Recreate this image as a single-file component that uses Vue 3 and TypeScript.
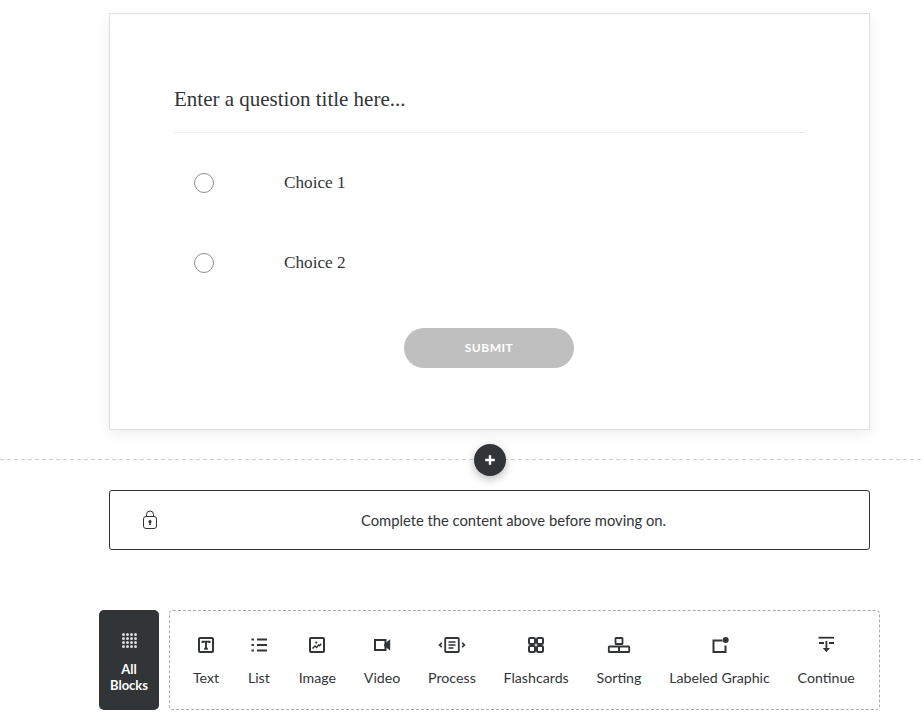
<script setup lang="ts">
interface Block { label: string; icon: string }
const blocks: Block[] = [
  { label: 'Text', icon: 'text' },
  { label: 'List', icon: 'list' },
  { label: 'Image', icon: 'image' },
  { label: 'Video', icon: 'video' },
  { label: 'Process', icon: 'process' },
  { label: 'Flashcards', icon: 'flashcards' },
  { label: 'Sorting', icon: 'sorting' },
  { label: 'Labeled Graphic', icon: 'labeled' },
  { label: 'Continue', icon: 'continue' },
]
const choices: string[] = ['Choice 1', 'Choice 2']
const dots: number[] = Array.from({ length: 16 }, (_, i) => i)
</script>

<template>
  <div class="page">
    <section class="card">
      <h2 class="title">Enter a question title here...</h2>
      <ul class="choices">
        <li v-for="c in choices" :key="c" class="choice">
          <span class="radio"></span>
          <span class="choice-text">{{ c }}</span>
        </li>
      </ul>
      <div class="submit-row"><button class="submit" type="button">SUBMIT</button></div>
    </section>

    <div class="separator">
      <button class="add" type="button" aria-label="Add block">
        <svg width="12" height="12" viewBox="0 0 12 12"><path d="M6 1.2v9.6M1.2 6h9.6" stroke="#fff" stroke-width="2.4" fill="none" /></svg>
      </button>
    </div>

    <div class="lock-box">
      <svg class="lock" width="16" height="20" viewBox="0 0 16 20" fill="none" stroke="#313537" stroke-width="1">
        <rect x="1.5" y="6.5" width="13" height="12" rx="2.5" />
        <path d="M4.5 6.5V4.5a3.5 3.5 0 0 1 7 0v2" />
        <circle cx="8" cy="11.5" r="1.6" fill="#313537" stroke="none" />
        <path d="M8 12v3" stroke-width="1.5" />
      </svg>
      <span class="lock-text">Complete the content above before moving on.</span>
    </div>

    <div class="toolbar">
      <button class="all" type="button">
        <span class="grid"><i v-for="d in dots" :key="d"></i></span>
        <span class="all-label">All<br />Blocks</span>
      </button>
      <div class="blocks">
        <div v-for="b in blocks" :key="b.label" class="block">
          <svg class="icon" width="24" height="24" viewBox="0 0 24 24" fill="none" stroke="#313537" stroke-width="2">
            <template v-if="b.icon === 'text'">
              <rect x="5" y="5" width="14" height="14" rx="1" />
              <path d="M8.5 10V8.6h7V10M12 8.6v7M10.2 15.8h3.6" stroke-width="1.9" />
            </template>
            <template v-else-if="b.icon === 'list'">
              <path d="M10 6.5h10M10 12h10M10 17.5h10" />
              <path d="M4.5 6.5h2.4M4.5 12h2.4M4.5 17.5h2.4" />
            </template>
            <template v-else-if="b.icon === 'image'">
              <rect x="5" y="5" width="14" height="14" rx="1" />
              <path d="M7.5 15.5l2.5-2.6 1.6 1.5 2-2.5 1 .8 1.6-2" stroke-width="1.4" />
              <circle cx="11.3" cy="9.6" r="1.1" fill="#313537" stroke="none" />
            </template>
            <template v-else-if="b.icon === 'video'">
              <rect x="5" y="7" width="10.5" height="10" />
              <path d="M15 11.6l4.3-3.4v7.6L15 12.6z" stroke-width="1.8" fill="#313537" />
            </template>
            <template v-else-if="b.icon === 'process'">
              <rect x="5.2" y="5" width="13.6" height="14" rx="1" stroke-width="1.8" />
              <path d="M8.5 9h7M8.5 12h7M8.5 15h5" stroke-width="1.6" />
              <path d="M1.8 9.8L-.4 12l2.2 2.2M22.2 9.8L24.4 12l-2.2 2.2" stroke-width="1.7" />
            </template>
            <template v-else-if="b.icon === 'flashcards'">
              <rect x="5" y="5" width="6" height="6" rx="1.2" />
              <rect x="13" y="5" width="6" height="6" rx="1.2" />
              <rect x="5" y="13" width="6" height="6" rx="1.2" />
              <rect x="13" y="13" width="6" height="6" rx="1.2" />
            </template>
            <template v-else-if="b.icon === 'sorting'">
              <rect x="8.5" y="5" width="7" height="6" rx=".6" stroke-width="1.8" />
              <rect x="1.8" y="13.5" width="10.2" height="5.5" rx=".6" stroke-width="1.8" />
              <rect x="12" y="13.5" width="10.2" height="5.5" rx=".6" stroke-width="1.8" />
            </template>
            <template v-else-if="b.icon === 'labeled'">
              <path d="M14.5 7.5H5.5V19h12v-6.5" stroke-width="2" />
              <circle cx="17.7" cy="7" r="3" fill="#313537" stroke="none" />
            </template>
            <template v-else>
              <path d="M4.5 4.7h15.5" stroke-width="1.8" />
              <path d="M5 10h5M15 10h5" stroke-width="1.8" />
              <path d="M12.4 8v8" stroke-width="1.8" />
              <path d="M8.8 15h7.2l-3.6 4.2z" fill="#313537" stroke="none" />
            </template>
          </svg>
          <span class="block-label">{{ b.label }}</span>
        </div>
      </div>
    </div>
  </div>
</template>

<style>
html, body { background: #fff; }
</style>

<style scoped>
.page {
  width: 924px;
  height: 726px;
  padding-top: 13px;
  box-sizing: border-box;
  overflow: hidden;
  font-family: "Lato", "Liberation Sans", sans-serif;
  color: #313537;
}
.card {
  box-sizing: border-box;
  width: 761px;
  height: 417px;
  margin-left: 109px;
  padding: 0 64px;
  border: 1px solid #e0e0e0;
  background: #fff;
  box-shadow: 0 4px 14px rgba(0, 0, 0, 0.07);
}
.title {
  margin: 0;
  padding: 72px 0 19px;
  height: 27px;
  line-height: 27px;
  box-sizing: content-box;
  font-family: "Liberation Serif", "DejaVu Serif", serif;
  font-size: 21px;
  font-weight: 400;
  color: #313537;
  border-bottom: 1px solid #ececec;
}
.choices { list-style: none; margin: 10px 0 0; padding: 0; }
.choice {
  display: flex;
  align-items: center;
  height: 80px;
  padding-left: 20px;
}
.radio {
  box-sizing: border-box;
  width: 20px;
  height: 20px;
  border: 1px solid #8f8f8f;
  border-radius: 50%;
  margin-right: 70px;
}
.choice-text {
  font-family: "Liberation Serif", "DejaVu Serif", serif;
  font-size: 17.2px;
  line-height: 20px;
  color: #313537;
}
.submit-row { display: flex; justify-content: center; margin: 25px 1px 0 0; }
.submit {
  width: 170px;
  height: 40px;
  padding: 0 0 2px;
  border: 0;
  border-radius: 20px;
  background: #bfbfbf;
  color: #fff;
  font-family: "Lato", sans-serif;
  font-size: 12px;
  font-weight: 700;
  letter-spacing: 0.5px;
}
.separator {
  box-sizing: border-box;
  display: flex;
  align-items: center;
  justify-content: center;
  height: 60px;
  padding: 0 54px 0 109px;
  background: repeating-linear-gradient(90deg, #cfcfcf 0 4px, transparent 4px 7px) 0 29px / 100% 1px no-repeat;
}
.add {
  display: flex;
  align-items: center;
  justify-content: center;
  width: 32px;
  height: 32px;
  padding: 0;
  border: 0;
  border-radius: 50%;
  background: #313537;
  box-shadow: 0 3px 8px rgba(0, 0, 0, 0.28);
}
.lock-box {
  box-sizing: border-box;
  display: flex;
  align-items: center;
  width: 761px;
  height: 60px;
  margin-left: 109px;
  padding-left: 32px;
  border: 1px solid #313537;
  border-radius: 3px;
  font-size: 14.75px;
}
.lock { flex: none; margin-left: -0.5px; margin-right: 0.5px; }
.lock-text { flex: 1; text-align: center; color: #313537; }
.toolbar {
  display: flex;
  gap: 10px;
  margin: 60px 0 0 99px;
  height: 100px;
}
.all {
  display: flex;
  flex-direction: column;
  align-items: center;
  width: 60px;
  height: 100px;
  padding: 23px 0 0;
  border: 0;
  border-radius: 5px;
  background: #313537;
  color: #fff;
  font-family: "Lato", sans-serif;
}
.grid {
  display: grid;
  grid-template-columns: repeat(4, 3px);
  gap: 1px;
}
.grid i { width: 3px; height: 3px; background: #d8d9d9; border-radius: 50%; }
.all-label {
  margin-top: 13px;
  font-size: 13px;
  font-weight: 700;
  line-height: 16px;
}
.blocks {
  box-sizing: border-box;
  display: flex;
  width: 711px;
  height: 100px;
  padding-left: 9px;
  border: 1px dashed #aaa;
  border-radius: 4px;
}
.block {
  display: flex;
  flex-direction: column;
  align-items: center;
  padding: 22px 13.9px 0;
}
.icon { overflow: visible; display: block; }
.block-label {
  margin-top: 11px;
  font-size: 14.2px;
  line-height: 20px;
  white-space: nowrap;
}
</style>
